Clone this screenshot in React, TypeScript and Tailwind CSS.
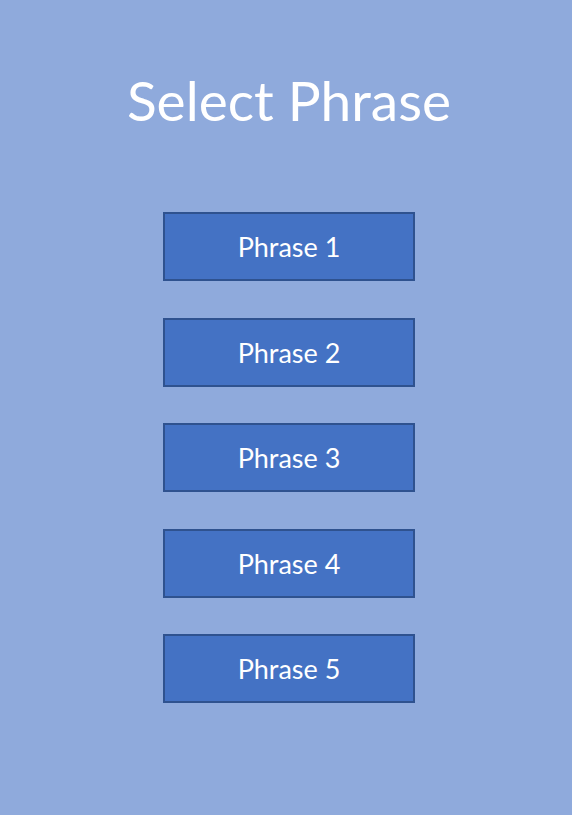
import React from 'react';

const phrases = ['Phrase 1', 'Phrase 2', 'Phrase 3', 'Phrase 4', 'Phrase 5'];

const App: React.FC = () => {
  return (
    <div className="w-[572px] h-[815px] bg-[#8faadc] flex flex-col items-center pl-[6px] font-['Lato',sans-serif]">
      <h1 className="mt-[68px] h-[64px] leading-[64px] text-[55px] text-white">Select Phrase</h1>
      <div className="mt-[80px] flex flex-col gap-[36.5px]">
        {phrases.map((p) => (
          <button
            key={p}
            className="w-[252px] h-[69px] pt-[2px] bg-[#4472c4] border-2 border-[#2f528f] text-white text-[27px] flex items-center justify-center"
          >
            {p}
          </button>
        ))}
      </div>
    </div>
  );
};

export default App;
